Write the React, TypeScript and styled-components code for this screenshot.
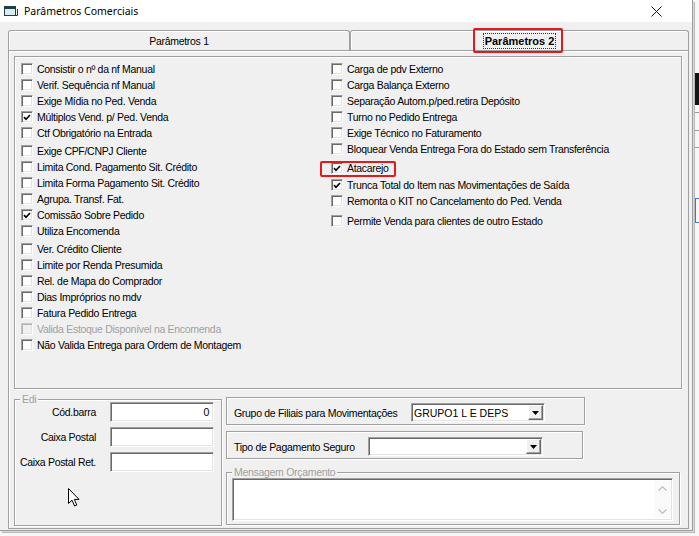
import styled, { createGlobalStyle } from "styled-components";

const GlobalStyle = createGlobalStyle`
  html, body {
    margin: 0;
    padding: 0;
  }
  body {
    width: 699px;
    height: 536px;
    overflow: hidden;
    background: #f7f7f7;
    font-family: "Liberation Sans", Arial, sans-serif;
    font-size: 10.5px;
    letter-spacing: -0.3px;
    color: #000;
  }
`;

const Desktop = styled.div`
  position: relative;
  width: 699px;
  height: 536px;
  overflow: hidden;
`;

/* bits of the application window lying behind the dialog */
const BehindBlock = styled.div<{ $top: number; $height: number; $color: string }>`
  position: absolute;
  left: 695px;
  top: ${(p) => p.$top}px;
  width: 4px;
  height: ${(p) => p.$height}px;
  background: ${(p) => p.$color};
`;

const BehindFrame = styled.div`
  position: absolute;
  left: 695px;
  top: 198px;
  width: 6px;
  height: 25px;
  box-sizing: border-box;
  border: 1px solid #3a7bd5;
`;

const Window = styled.div`
  position: relative;
  box-sizing: border-box;
  width: 693px;
  height: 531px;
  display: flex;
  flex-direction: column;
  background: #f0f0f0;
  border-right: 1px solid #9c9c9c;
  border-bottom: 1px solid #9c9c9c;
  box-shadow: 1px 1px 0 #dadada, 2px 2px 0 #b8b8b8;
`;

const TitleBar = styled.div`
  height: 22px;
  flex-shrink: 0;
  display: flex;
  align-items: center;
  padding-left: 4px;
  background: #ffffff;
`;

const TitleText = styled.span`
  margin-left: 6px;
  font-family: "Noto Sans", "Liberation Sans", sans-serif;
  font-size: 10.5px;
  letter-spacing: 0;
`;

const CloseButton = styled.div`
  margin-left: auto;
  margin-right: 22px;
  width: 28px;
  height: 22px;
  display: flex;
  align-items: center;
  justify-content: center;
`;

const Client = styled.div`
  flex: 1;
  min-height: 0;
  display: flex;
  flex-direction: column;
  padding: 8px 3px 1px 8px;
`;

const TabStrip = styled.div`
  display: flex;
  height: 20px;
  flex-shrink: 0;
`;

const Tab = styled.div<{ $width: number; $active?: boolean }>`
  box-sizing: border-box;
  width: ${(p) => p.$width}px;
  height: 20px;
  display: flex;
  align-items: center;
  justify-content: center;
  padding-top: 1px;
  border: 1px solid #a0a0a0;
  border-bottom: none;
  border-radius: 3px 3px 0 0;
  box-shadow: inset 1px 1px 0 #ffffff;
  font-weight: ${(p) => (p.$active ? 700 : 400)};
  font-size: ${(p) => (p.$active ? "11px" : "10.5px")};
  letter-spacing: ${(p) => (p.$active ? "0" : "-0.3px")};
`;

const FocusLabel = styled.span`
  position: relative;
  padding: 0 1px;
  line-height: 14px;
  border: 1px dotted #333;
`;

const Highlight = styled.span<{ $inset: string }>`
  position: absolute;
  inset: ${(p) => p.$inset};
  border: 2px solid #e3191e;
  border-radius: 2px;
  pointer-events: none;
`;

const TabPanel = styled.div`
  flex: 1;
  min-height: 0;
  box-sizing: border-box;
  display: flex;
  flex-direction: column;
  padding: 5px 0 0 5px;
  border: 1px solid #a0a0a0;
  box-shadow: inset 1px 1px 0 #ffffff;
`;

const GroupBox = styled.div`
  position: relative;
  box-sizing: border-box;
  border: 1px solid #a0a0a0;
  box-shadow: inset 1px 1px 0 #ffffff, 1px 1px 0 #ffffff;
`;

const Caption = styled.span`
  position: absolute;
  top: -7px;
  left: 5px;
  padding: 0 2px;
  line-height: 12px;
  background: #f0f0f0;
  color: #a0a0a0;
  white-space: nowrap;
`;

const OptionsBox = styled(GroupBox)`
  width: 668px;
  height: 333px;
  flex-shrink: 0;
  display: grid;
  grid-template-columns: 310px 1fr;
  align-items: start;
  padding: 4px 0 0 6px;
`;

const OptionColumn = styled.div`
  display: flex;
  flex-direction: column;
`;

const CheckRow = styled.div<{ $gap?: number; $disabled?: boolean }>`
  position: relative;
  align-self: flex-start;
  display: flex;
  align-items: center;
  gap: 4px;
  height: 16px;
  margin-top: ${(p) => p.$gap ?? 0}px;
  white-space: nowrap;
  color: ${(p) => (p.$disabled ? "#a0a0a0" : "#000")};
`;

const CheckBox = styled.span<{ $disabled?: boolean }>`
  box-sizing: border-box;
  width: 12px;
  height: 12px;
  flex-shrink: 0;
  display: flex;
  align-items: center;
  justify-content: center;
  background: ${(p) => (p.$disabled ? "#f0f0f0" : "#ffffff")};
  border: 1px solid;
  border-color: ${(p) =>
    p.$disabled ? "#c4c4c4 #ffffff #ffffff #c4c4c4" : "#a0a0a0 #ffffff #ffffff #a0a0a0"};
  box-shadow: ${(p) =>
    p.$disabled
      ? "inset 1px 1px 0 #b4b4b4, inset -1px -1px 0 #e3e3e3"
      : "inset 1px 1px 0 #696969, inset -1px -1px 0 #e3e3e3"};
`;

const BottomArea = styled.div`
  display: flex;
  align-items: flex-start;
  gap: 4px;
  margin-top: 8px;
`;

const EdiBox = styled(GroupBox)`
  width: 208px;
  height: 127px;
  margin-top: 2px;
  padding: 2px 0 0 3px;
  display: grid;
  grid-template-columns: 78px 104px;
  grid-auto-rows: 20px;
  column-gap: 14px;
  row-gap: 5px;
  align-content: start;
`;

const FieldLabel = styled.span`
  align-self: center;
  text-align: right;
  white-space: nowrap;
`;

const Sunken = styled.div`
  box-sizing: border-box;
  background: #ffffff;
  border: 1px solid;
  border-color: #a0a0a0 #ffffff #ffffff #a0a0a0;
  box-shadow: inset 1px 1px 0 #696969, inset -1px -1px 0 #e3e3e3;
`;

const TextInput = styled(Sunken)<{ $right?: boolean }>`
  height: 20px;
  display: flex;
  align-items: center;
  justify-content: ${(p) => (p.$right ? "flex-end" : "flex-start")};
  padding: 0 4px;
`;

const Pointer = styled.svg`
  position: absolute;
  left: 53px;
  top: 88px;
`;

const RightColumn = styled.div`
  display: flex;
  flex-direction: column;
`;

const FieldPanel = styled(GroupBox)<{ $width: number; $labelWidth: number; $gap?: number }>`
  width: ${(p) => p.$width}px;
  height: 28px;
  margin-top: ${(p) => p.$gap ?? 0}px;
  display: grid;
  grid-template-columns: ${(p) => p.$labelWidth}px auto;
  align-items: center;
  padding: 3px 0 0 7px;
`;

const Combo = styled(Sunken)<{ $width: number }>`
  width: ${(p) => p.$width}px;
  height: 19px;
  display: flex;
  align-items: center;
  padding: 0 1px 0 2px;
`;

const ComboValue = styled.span`
  flex: 1;
  white-space: nowrap;
  letter-spacing: 0;
`;

const DropButton = styled.span`
  box-sizing: border-box;
  width: 15px;
  height: 15px;
  display: flex;
  align-items: center;
  justify-content: center;
  background: #f0f0f0;
  border: 1px solid;
  border-color: #ffffff #696969 #696969 #ffffff;
  box-shadow: inset -1px -1px 0 #a0a0a0;
`;

const MessageBox = styled(GroupBox)`
  width: 454px;
  height: 53px;
  margin-top: 13px;
  padding: 5px 0 0 5px;
`;

const Memo = styled(Sunken)`
  width: 441px;
  height: 43px;
  display: flex;
  justify-content: flex-end;
  padding: 2px 1px 2px 0;
`;

const ScrollTrack = styled.div`
  width: 17px;
  display: flex;
  flex-direction: column;
  justify-content: space-between;
  align-items: center;
  padding: 5px 0 4px;
  background: #fafafa;
`;

type Option = {
  label: string;
  checked?: boolean;
  disabled?: boolean;
  gap?: number;
  marked?: boolean;
};

const leftOptions: Option[] = [
  { label: "Consistir o nº da nf Manual" },
  { label: "Verif. Sequência nf Manual" },
  { label: "Exige Mídia no Ped. Venda" },
  { label: "Múltiplos Vend. p/ Ped. Venda", checked: true },
  { label: "Ctf Obrigatório na Entrada" },
  { label: "Exige CPF/CNPJ Cliente", gap: 2 },
  { label: "Limita Cond. Pagamento Sit. Crédito" },
  { label: "Limita Forma Pagamento Sit. Crédito" },
  { label: "Agrupa. Transf. Fat." },
  { label: "Comissão Sobre Pedido", checked: true },
  { label: "Utiliza Encomenda" },
  { label: "Ver. Crédito Cliente", gap: 2 },
  { label: "Limite por Renda Presumida" },
  { label: "Rel. de Mapa do Comprador" },
  { label: "Dias Impróprios no mdv" },
  { label: "Fatura Pedido Entrega" },
  { label: "Valida Estoque Disponível na Encomenda", disabled: true },
  { label: "Não Valida Entrega para Ordem de Montagem" },
];

const rightOptions: Option[] = [
  { label: "Carga de pdv Externo" },
  { label: "Carga Balança Externo" },
  { label: "Separação Autom.p/ped.retira Depósito" },
  { label: "Turno no Pedido Entrega" },
  { label: "Exige Técnico no Faturamento" },
  { label: "Bloquear Venda Entrega Fora do Estado sem Transferência" },
  { label: "Atacarejo", checked: true, gap: 3, marked: true },
  { label: "Trunca Total do Item nas Movimentações de Saída", checked: true, gap: 1 },
  { label: "Remonta o KIT no Cancelamento do Ped. Venda" },
  { label: "Permite Venda para clientes de outro Estado", gap: 4 },
];

function CheckMark() {
  return (
    <svg width="8" height="7" viewBox="0 0 8 7">
      <path d="M1 3.2 L3 5.3 L7 1" fill="none" stroke="#000" strokeWidth="1.7" />
    </svg>
  );
}

function OptionRow({ option }: { option: Option }) {
  return (
    <CheckRow $gap={option.gap} $disabled={option.disabled}>
      <CheckBox $disabled={option.disabled}>{option.checked && <CheckMark />}</CheckBox>
      {option.label}
      {option.marked && <Highlight $inset="1px -7px -1px -11px" />}
    </CheckRow>
  );
}

function DownArrow() {
  return (
    <svg width="7" height="4" viewBox="0 0 7 4">
      <path d="M0 0 H7 L3.5 4 Z" fill="#000" />
    </svg>
  );
}

function Chevron({ up }: { up?: boolean }) {
  return (
    <svg width="9" height="5" viewBox="0 0 9 5">
      <path
        d={up ? "M0.5 4.5 L4.5 0.8 L8.5 4.5" : "M0.5 0.5 L4.5 4.2 L8.5 0.5"}
        fill="none"
        stroke="#bcbcbc"
        strokeWidth="1.2"
      />
    </svg>
  );
}

export default function App() {
  return (
    <Desktop>
      <GlobalStyle />
      <BehindBlock $top={73} $height={32} $color="#141414" />
      <BehindBlock $top={112} $height={1} $color="#9a9a9a" />
      <BehindBlock $top={130} $height={1} $color="#9a9a9a" />
      <BehindBlock $top={147} $height={1} $color="#9a9a9a" />
      <BehindFrame />
      <Window>
        <TitleBar>
          <svg width="14" height="12" viewBox="0 0 14 12">
            <rect x="0.5" y="1.5" width="11" height="9" fill="#d9ecef" stroke="#1f3f47" />
            <rect x="0.5" y="1.5" width="11" height="2.5" fill="#1f3f47" />
            <path d="M3 10.5 H13.5 V4" fill="none" stroke="#1f3f47" />
          </svg>
          <TitleText>Parâmetros Comerciais</TitleText>
          <CloseButton>
            <svg width="11" height="11" viewBox="0 0 11 11">
              <path d="M0.5 0.5 L10.5 10.5 M10.5 0.5 L0.5 10.5" stroke="#111" strokeWidth="1" />
            </svg>
          </CloseButton>
        </TitleBar>
        <Client>
          <TabStrip>
            <Tab $width={342}>Parâmetros 1</Tab>
            <Tab $width={339} $active>
              <FocusLabel>
                Parâmetros 2
                <Highlight $inset="-6px -8px -5px -11px" />
              </FocusLabel>
            </Tab>
          </TabStrip>
          <TabPanel>
            <OptionsBox>
              <OptionColumn>
                {leftOptions.map((o) => (
                  <OptionRow key={o.label} option={o} />
                ))}
              </OptionColumn>
              <OptionColumn>
                {rightOptions.map((o) => (
                  <OptionRow key={o.label} option={o} />
                ))}
              </OptionColumn>
            </OptionsBox>
            <BottomArea>
              <EdiBox>
                <Caption>Edi</Caption>
                <FieldLabel>Cód.barra</FieldLabel>
                <TextInput $right>0</TextInput>
                <FieldLabel>Caixa Postal</FieldLabel>
                <TextInput />
                <FieldLabel>Caixa Postal Ret.</FieldLabel>
                <TextInput />
                <Pointer width="12" height="19" viewBox="0 0 12 19">
                  <path
                    d="M0.5 0.5 V15.5 L4 12.2 L6.6 18 L8.8 17 L6.3 11.4 H11 Z"
                    fill="#fff"
                    stroke="#000"
                    strokeWidth="1"
                    strokeLinejoin="round"
                  />
                </Pointer>
              </EdiBox>
              <RightColumn>
                <FieldPanel $width={359} $labelWidth={177}>
                  <span>Grupo de Filiais para Movimentações</span>
                  <Combo $width={134}>
                    <ComboValue>GRUPO1 L E DEPS</ComboValue>
                    <DropButton>
                      <DownArrow />
                    </DropButton>
                  </Combo>
                </FieldPanel>
                <FieldPanel $width={357} $labelWidth={134} $gap={6}>
                  <span>Tipo de Pagamento Seguro</span>
                  <Combo $width={175}>
                    <ComboValue />
                    <DropButton>
                      <DownArrow />
                    </DropButton>
                  </Combo>
                </FieldPanel>
                <MessageBox>
                  <Caption>Mensagem Orçamento</Caption>
                  <Memo>
                    <ScrollTrack>
                      <Chevron up />
                      <Chevron />
                    </ScrollTrack>
                  </Memo>
                </MessageBox>
              </RightColumn>
            </BottomArea>
          </TabPanel>
        </Client>
      </Window>
    </Desktop>
  );
}
